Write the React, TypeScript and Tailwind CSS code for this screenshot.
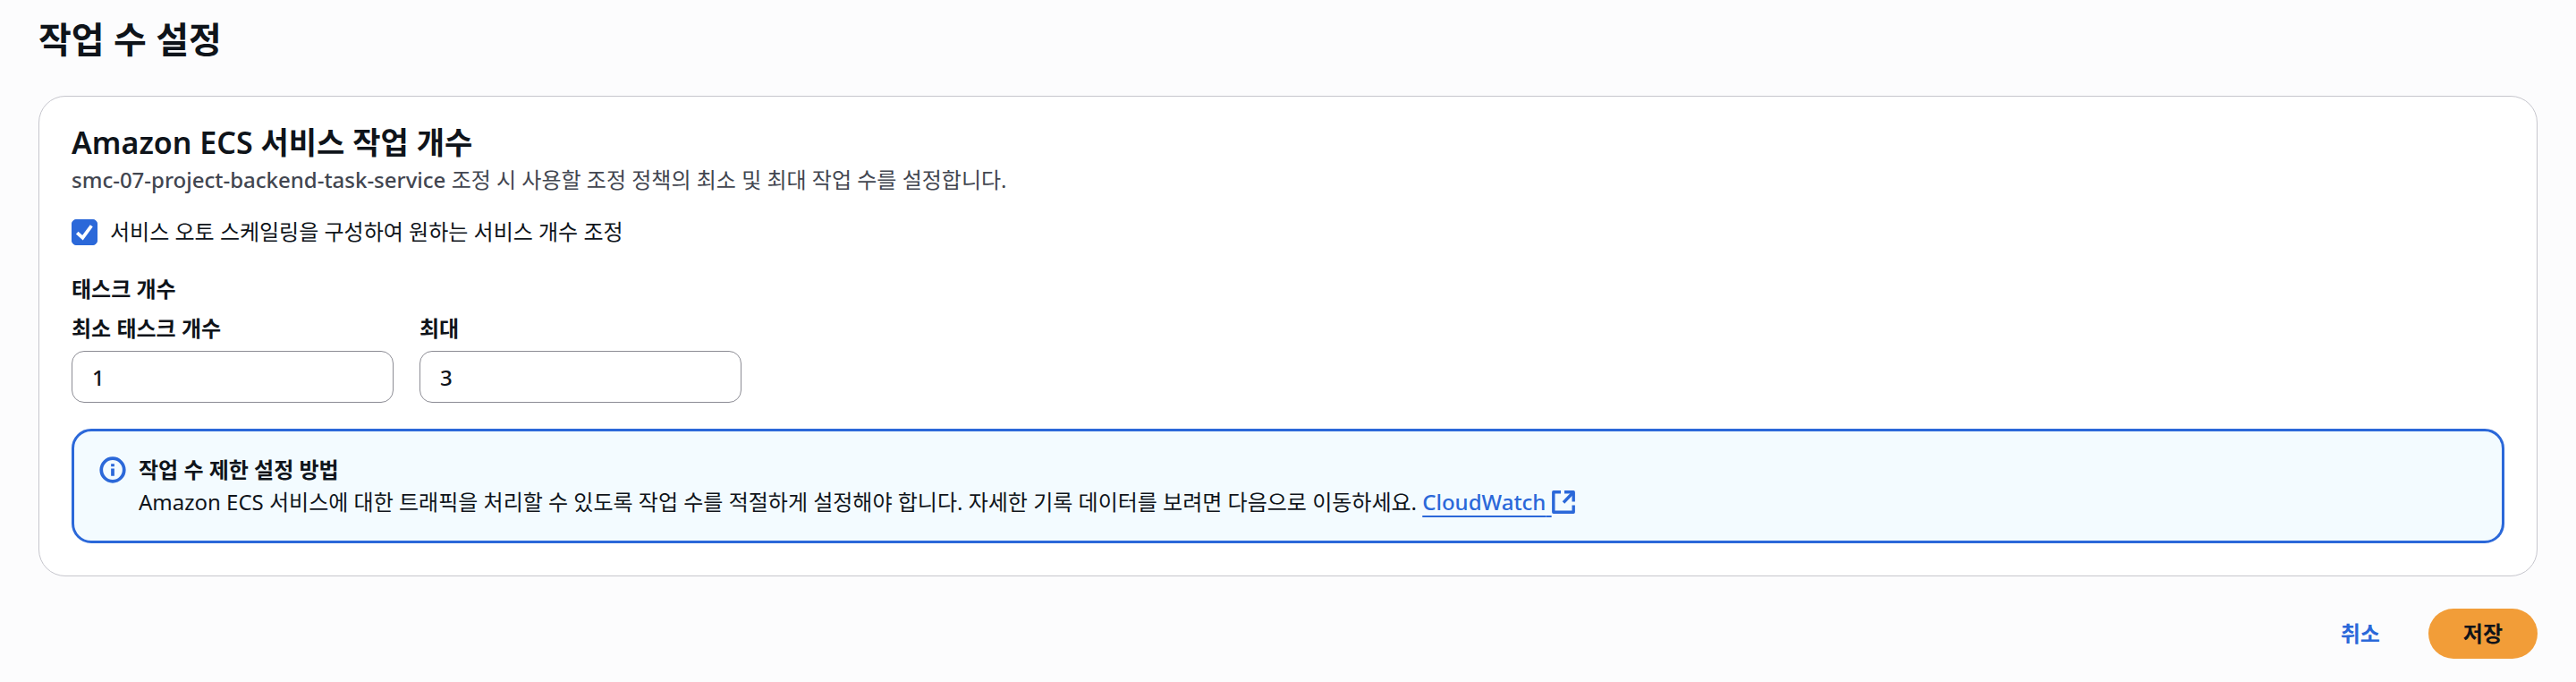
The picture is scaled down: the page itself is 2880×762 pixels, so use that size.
import { ChangeEvent, ReactElement, useState } from "react";

function InfoIcon(): ReactElement {
  return (
    <svg viewBox="0 0 16 16" className="size-[30px] shrink-0" fill="none" stroke="currentColor" strokeWidth="2" aria-hidden="true">
      <circle cx="8" cy="8" r="6.8" />
      <path d="M8 11.6V7.2M8 6V4.4" />
    </svg>
  );
}

function ExternalIcon(): ReactElement {
  return (
    <svg viewBox="0 0 26 26" className="size-[26px] shrink-0" fill="none" stroke="currentColor" strokeWidth="3.4" strokeLinejoin="round" aria-hidden="true">
      <path d="M10 1.8H1.8V24.2H24.2V16.5" />
      <path d="M14 1.8H24.2V12.5" />
      <path d="M24 2L13 13.5" />
    </svg>
  );
}

export default function App(): ReactElement {
  const [autoScaling, setAutoScaling] = useState(true);
  const [counts, setCounts] = useState({min: '1', max: '3'});

  function handleCounts(e: ChangeEvent<HTMLInputElement>) {
    setCounts((state) => ({...state, [e.target.name]: e.target.value}));
  }

  return (
    <main className="min-h-screen bg-[#fcfcfd] px-[43px] pt-4 pb-6 text-[24px] leading-9 text-[#0f141a] font-['Noto_Sans','Noto_Sans_CJK_KR',sans-serif]">
      <h1 className="text-[40px] leading-[56px] font-bold">작업 수 설정</h1>

      <section className="mt-[35px] rounded-[30px] border border-[#c6c6cd] bg-white px-9 pt-[27px] pb-9">
        <h2 className="text-[34px] leading-12 font-semibold">Amazon ECS 서비스 작업 개수</h2>
        <p className="text-[#424650]">
          <span className="font-medium">smc-07-project-backend-task-service</span> 조정 시 사용할 조정 정책의 최소 및 최대 작업 수를 설정합니다.
        </p>

        <div className="mt-[22px] flex items-center gap-[14px]">
          <span className="grid size-[29px] text-white">
            <input
              id="auto-scaling"
              type="checkbox"
              checked={autoScaling}
              onChange={(e) => setAutoScaling(e.target.checked)}
              className="peer col-start-1 row-start-1 size-[29px] appearance-none rounded-[5px] border border-[#8c8c94] checked:border-[#2b68d9] checked:bg-[#2b68d9]"
            />
            <svg viewBox="0 0 28 28" className="pointer-events-none invisible col-start-1 row-start-1 size-[29px] peer-checked:visible" fill="none" stroke="currentColor" strokeWidth="3.6" aria-hidden="true">
              <path d="M6 14.5L12 20L21.5 7" />
            </svg>
          </span>
          <label htmlFor="auto-scaling">서비스 오토 스케일링을 구성하여 원하는 서비스 개수 조정</label>
        </div>

        <fieldset className="mt-7">
          <legend className="font-bold">태스크 개수</legend>
          <div className="mt-2 flex gap-[29px]">
            <div className="flex w-[360px] flex-col gap-[7px]">
              <label htmlFor="min" className="font-bold">최소 태스크 개수</label>
              <input
                id="min"
                name="min"
                type="text"
                inputMode="numeric"
                value={counts.min}
                onChange={handleCounts}
                className="h-[58px] rounded-[14px] border border-[#8c8c94] bg-white px-[22px] font-medium outline-none"
              />
            </div>
            <div className="flex w-[360px] flex-col gap-[7px]">
              <label htmlFor="max" className="font-bold">최대</label>
              <input
                id="max"
                name="max"
                type="text"
                inputMode="numeric"
                value={counts.max}
                onChange={handleCounts}
                className="h-[58px] rounded-[14px] border border-[#8c8c94] bg-white px-[22px] font-medium outline-none"
              />
            </div>
          </div>
        </fieldset>

        <div className="mt-[29px] flex items-start gap-[14px] rounded-[22px] border-3 border-[#2b68d9] bg-[#f3fbff] px-7 py-[25px]">
          <span className="flex h-9 items-center text-[#2b68d9]">
            <InfoIcon />
          </span>
          <div>
            <h3 className="font-bold">작업 수 제한 설정 방법</h3>
            <p>
              Amazon ECS 서비스에 대한 트래픽을 처리할 수 있도록 작업 수를 적절하게 설정해야 합니다. 자세한 기록 데이터를 보려면 다음으로 이동하세요.{' '}
              <a href="#cloudwatch" className="inline-flex items-center font-medium text-[#2b68d9]">
                <span className="underline decoration-2 underline-offset-6">CloudWatch{'\u00a0'}</span>
                <ExternalIcon />
              </a>
            </p>
          </div>
        </div>
      </section>

      <div className="mt-9 flex justify-end gap-4">
        <button type="button" className="h-14 rounded-full px-[38px] font-bold text-[#2b68d9]">취소</button>
        <button type="button" className="h-14 rounded-full bg-[#f29d38] px-[39px] font-bold">저장</button>
      </div>
    </main>
  );
}
